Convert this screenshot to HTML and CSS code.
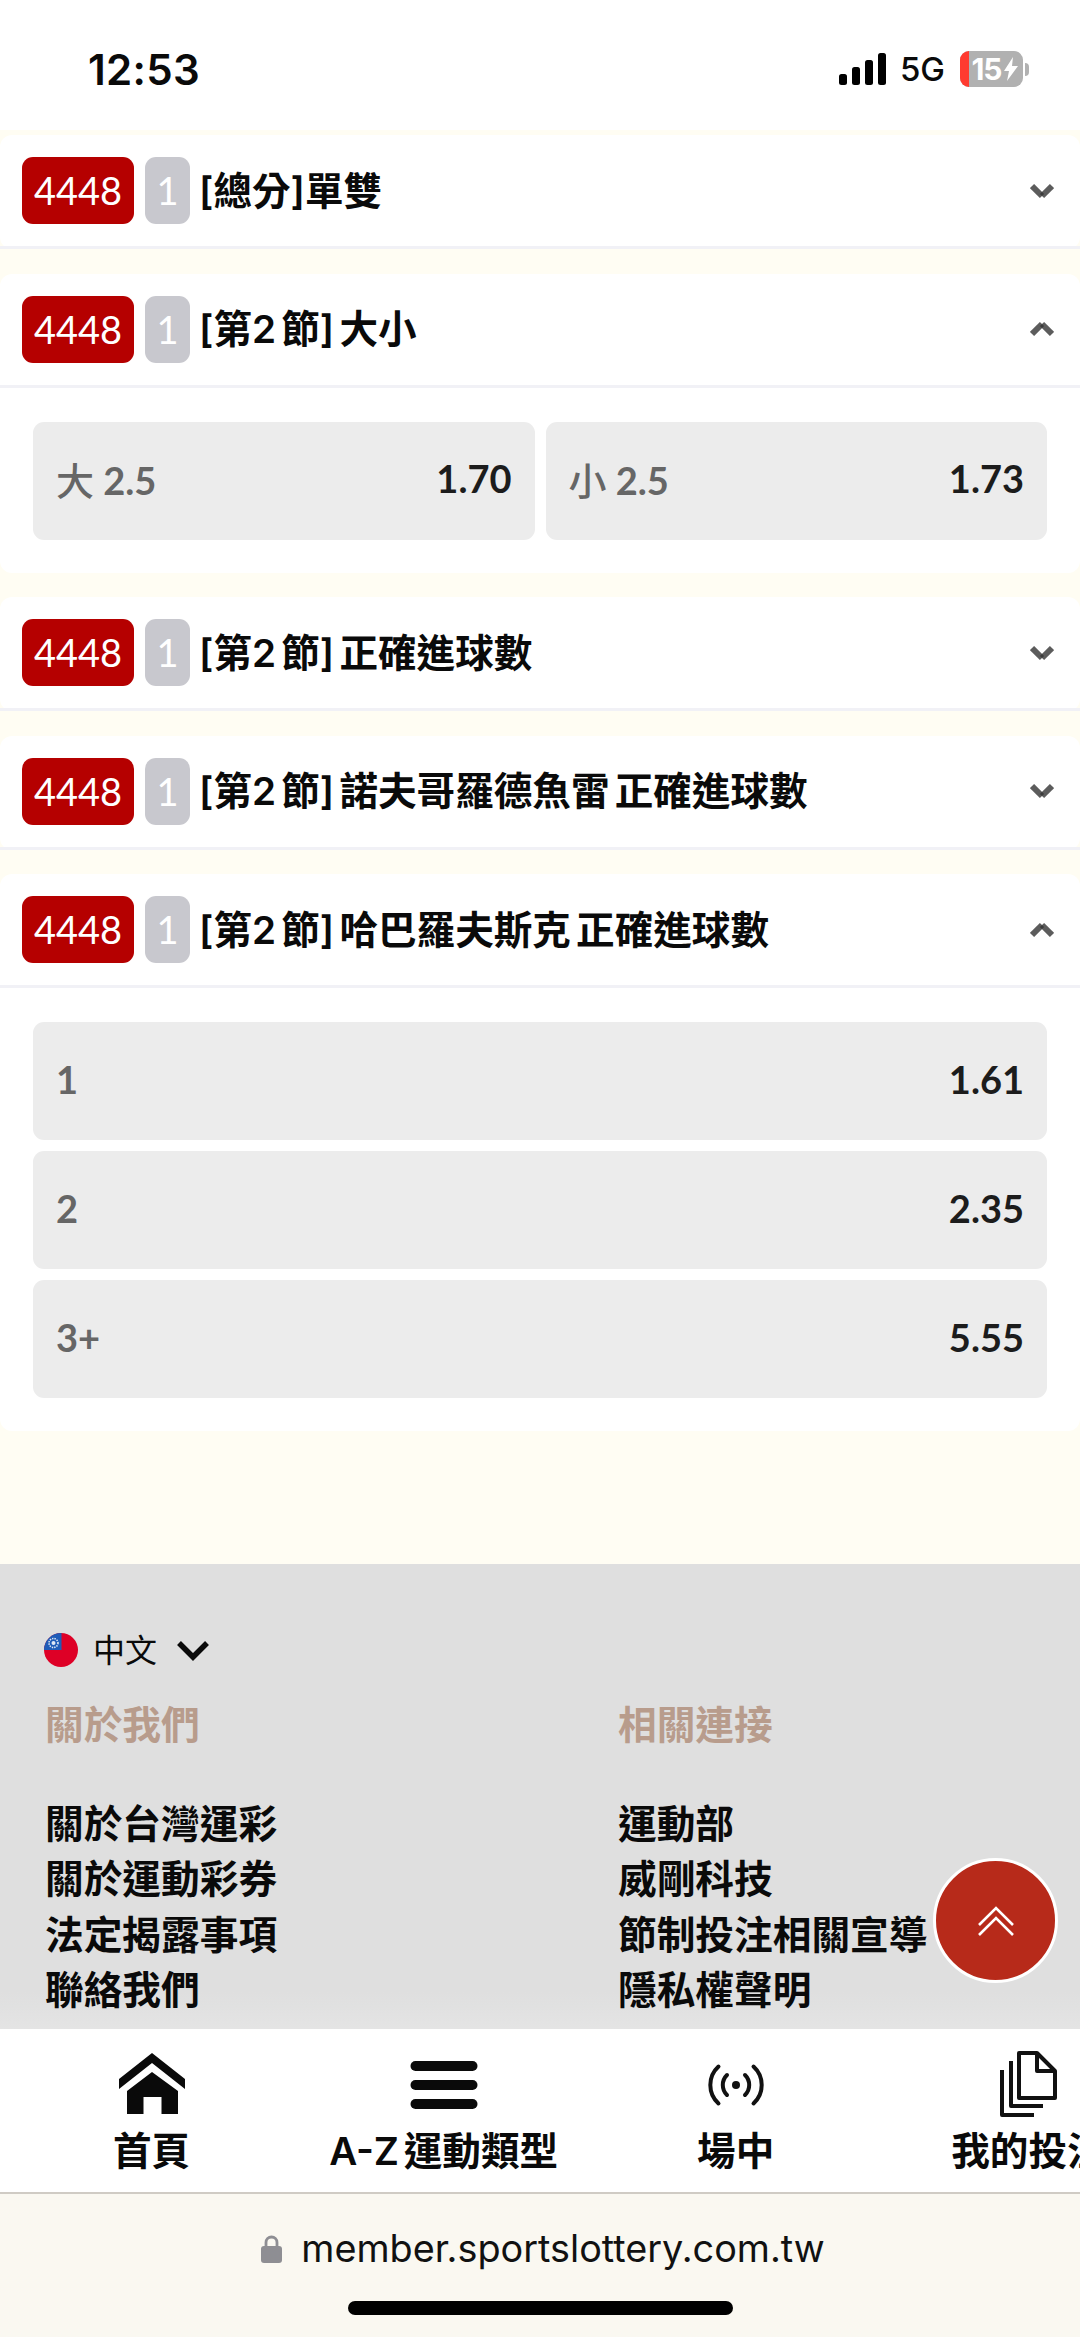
FILE: index.html
```html
<!DOCTYPE html>
<html lang="zh-Hant">
<head>
  <meta charset="UTF-8" />
  <meta name="viewport" content="width=device-width, initial-scale=1.0"/>
  <title>運彩</title>
  <link rel="stylesheet" href="styles.css">
</head>
<body>
<div class="page">

  <div class="status">
    <span class="time">12:53</span>
    <div class="status-right">
      <svg class="signal" width="47" height="32" viewBox="0 0 47 32"><rect x="0" y="21" width="8" height="11" rx="2.5"/><rect x="13" y="14" width="8" height="18" rx="2.5"/><rect x="26" y="7" width="8" height="25" rx="2.5"/><rect x="39" y="0" width="8" height="32" rx="2.5"/></svg>
      <span class="net">5G</span>
      <div class="battery">
        <div class="battery-body"><span class="battery-low"></span><span class="battery-num">15</span>
          <svg class="bolt" width="14" height="24" viewBox="0 0 14 24"><path d="M9 0 0 14h5L3 24l11-15H8z" fill="#fff"/></svg>
        </div>
        <span class="battery-cap"></span>
      </div>
    </div>
  </div>

  <main class="markets">
    <section class="card">
      <div class="card-head">
        <span class="code">4448</span><span class="num">1</span><span class="name">[總分]單雙</span>
        <svg class="arrow" width="24" height="18" viewBox="0 0 24 18"><path class="arrow-l" d="M2 4l10 10"/><path class="arrow-l" d="M22 4 12 14"/></svg>
      </div>
    </section>

    <section class="card">
      <div class="card-head">
        <span class="code">4448</span><span class="num">1</span><span class="name">[第2 節] 大小</span>
        <svg class="arrow" width="24" height="18" viewBox="0 0 24 18"><path class="arrow-l" d="M2 14 12 4"/><path class="arrow-l" d="M22 14 12 4"/></svg>
      </div>
      <div class="card-body two">
        <div class="opt"><span class="opt-label"><span class="opt-cjk">大</span> 2.5</span><span class="opt-val">1.70</span></div>
        <div class="opt"><span class="opt-label"><span class="opt-cjk">小</span> 2.5</span><span class="opt-val">1.73</span></div>
      </div>
    </section>

    <section class="card">
      <div class="card-head">
        <span class="code">4448</span><span class="num">1</span><span class="name">[第2 節] 正確進球數</span>
        <svg class="arrow" width="24" height="18" viewBox="0 0 24 18"><path class="arrow-l" d="M2 4l10 10"/><path class="arrow-l" d="M22 4 12 14"/></svg>
      </div>
    </section>

    <section class="card">
      <div class="card-head">
        <span class="code">4448</span><span class="num">1</span><span class="name">[第2 節] 諾夫哥羅德魚雷 正確進球數</span>
        <svg class="arrow" width="24" height="18" viewBox="0 0 24 18"><path class="arrow-l" d="M2 4l10 10"/><path class="arrow-l" d="M22 4 12 14"/></svg>
      </div>
    </section>

    <section class="card">
      <div class="card-head">
        <span class="code">4448</span><span class="num">1</span><span class="name">[第2 節] 哈巴羅夫斯克 正確進球數</span>
        <svg class="arrow" width="24" height="18" viewBox="0 0 24 18"><path class="arrow-l" d="M2 14 12 4"/><path class="arrow-l" d="M22 14 12 4"/></svg>
      </div>
      <div class="card-body">
        <div class="opt"><span class="opt-label">1</span><span class="opt-val">1.61</span></div>
        <div class="opt"><span class="opt-label">2</span><span class="opt-val">2.35</span></div>
        <div class="opt"><span class="opt-label">3+</span><span class="opt-val">5.55</span></div>
      </div>
    </section>
  </main>

  <footer class="foot">
    <div class="lang">
      <svg class="flag" width="34" height="34" viewBox="0 0 34 34"><defs><clipPath id="flagClip"><circle cx="17" cy="17" r="17"/></clipPath></defs><g clip-path="url(#flagClip)"><rect width="34" height="34" fill="#de0026"/><rect width="17.5" height="17" fill="#1f5cb8"/><circle cx="9.5" cy="10" r="4.5" fill="none" stroke="#dfe8f5" stroke-width="1.6" stroke-dasharray="1.4 1"/><circle cx="9.5" cy="10" r="2" fill="#dfe8f5"/></g></svg>
      <span class="lang-name">中文</span>
      <svg class="lang-arrow" width="34" height="22" viewBox="0 0 34 22"><path d="M3 4l14 14L31 4" fill="none" stroke="#0a0a0a" stroke-width="5.5"/></svg>
    </div>
    <div class="foot-cols">
      <div class="foot-col">
        <h4>關於我們</h4>
        <a>關於台灣運彩</a>
        <a>關於運動彩券</a>
        <a>法定揭露事項</a>
        <a>聯絡我們</a>
      </div>
      <div class="foot-col">
        <h4>相關連接</h4>
        <a>運動部</a>
        <a>威剛科技</a>
        <a>節制投注相關宣導</a>
        <a>隱私權聲明</a>
      </div>
    </div>
  </footer>

  <nav class="tabs">
    <div class="tab tab-home">
      <svg width="68" height="66" viewBox="0 0 68 66" fill="#0a0a0a"><path d="M34 2 67 28V38L34 12 1 38V28z"/><path d="M34 21 60 40V63H43.5V46H25.5V63H9V40z"/></svg>
      <span>首頁</span>
    </div>
    <div class="tab tab-az">
      <svg width="68" height="66" viewBox="0 0 68 66" fill="#0a0a0a"><rect x="0.5" y="10" width="67" height="10" rx="5"/><rect x="0.5" y="29" width="67" height="10" rx="5"/><rect x="0.5" y="48" width="67" height="10" rx="5"/></svg>
      <span>A-Z 運動類型</span>
    </div>
    <div class="tab tab-live">
      <svg width="64" height="66" viewBox="0 0 64 66" fill="none" stroke="#111" stroke-width="4" stroke-linecap="round"><path d="M14.5 15.5a25 25 0 0 0 0 37"/><path d="M49.5 15.5a25 25 0 0 1 0 37"/><path d="M23 24a14 14 0 0 0 0 20"/><path d="M41 24a14 14 0 0 1 0 20"/><circle cx="32" cy="34" r="4" fill="#111" stroke="none"/></svg>
      <span>場中</span>
    </div>
    <div class="tab tab-bets">
      <svg width="58" height="66" viewBox="0 0 58 66" fill="none" stroke="#111" stroke-width="4" stroke-linejoin="round"><path d="M3 19V64H35"/><path d="M12 10V55H44"/><path d="M20 2V47H56V20L38 2z"/><path d="M38 2V20H56"/></svg>
      <span>我的投注</span>
    </div>
  </nav>

  <div class="urlbar">
    <div class="url">
      <svg width="21" height="29" viewBox="0 0 21 29"><path d="M5 13V8.5a5.5 5.5 0 0 1 11 0V13" fill="none" stroke="#8e8e93" stroke-width="2.8"/><rect x="0" y="12" width="21" height="17" rx="3" fill="#8e8e93"/></svg>
      <span>member.sportslottery.com.tw</span>
    </div>
    <div class="home-bar"></div>
  </div>

  <a class="to-top">
    <svg width="36" height="30" viewBox="0 0 36 30" fill="none" stroke="#fff" stroke-width="2.6"><path d="M1 19 18 2 35 19"/><path d="M1 29 18 12 35 29"/></svg>
  </a>

</div>
</body>
</html>
```

FILE: styles.css
```css
* {
  box-sizing: border-box;
}

body {
  margin: 0;
  padding: 0;
  background: #fff;
  font-family: "Lato", "Noto Sans CJK TC", sans-serif;
  color: #0a0a0a;
}

.page {
  position: relative;
  display: flex;
  flex-direction: column;
  width: 1080px;
  height: 2337px;
  overflow: hidden;
}

/* status bar */
.status {
  display: flex;
  align-items: center;
  justify-content: space-between;
  flex: none;
  height: 130px;
  padding: 8px 51px 0 88px;
  background: #fff;
}

.time {
  font-family: "Inter", sans-serif;
  font-size: 42px;
  font-weight: 600;
  letter-spacing: 0.3px;
}

.status-right {
  display: flex;
  align-items: center;
}

.net {
  margin-left: 14px;
  font-family: "Inter", sans-serif;
  font-size: 33px;
  font-weight: 500;
}

.battery {
  display: flex;
  align-items: center;
  margin-left: 15px;
}

.battery-body {
  position: relative;
  display: flex;
  align-items: center;
  justify-content: center;
  gap: 2px;
  width: 63px;
  height: 36px;
  padding-left: 6px;
  border-radius: 9px;
  background: #b1b1b1;
  overflow: hidden;
}

.battery-low {
  position: absolute;
  left: 0;
  top: 0;
  bottom: 0;
  width: 9px;
  background: #ff3b30;
}

.battery-num {
  color: #fff;
  font-family: "Inter", sans-serif;
  font-size: 30px;
  font-weight: 700;
  letter-spacing: -1px;
}

.bolt {
  flex: none;
}

.battery-cap {
  width: 4px;
  height: 13px;
  margin-left: 2px;
  border-radius: 0 4px 4px 0;
  background: #b1b1b1;
}

/* market list */
.markets {
  flex: 1;
  padding-top: 5px;
  background: #fffdf3;
}

.card {
  margin-bottom: 24.5px;
  border-radius: 12px;
  background: #fff;
}

.card-head {
  display: flex;
  align-items: center;
  height: 114px;
  padding: 0 26px 0 22px;
  border-bottom: 3px solid #f1f1f6;
}

.code {
  width: 112px;
  height: 67px;
  border-radius: 11px;
  background: #b50000;
  color: #fff;
  font-size: 38px;
  line-height: 67px;
  text-align: center;
}

.num {
  width: 45px;
  height: 67px;
  margin-left: 11px;
  border-radius: 11px;
  background: #c8c8ce;
  color: #fff;
  font-size: 38px;
  line-height: 67px;
  text-align: center;
}

.name {
  flex: 1;
  margin-left: 9px;
  padding-bottom: 6px;
  font-family: "Inter", "Noto Sans CJK TC", sans-serif;
  font-size: 38.6px;
  font-weight: 600;
  word-spacing: -4.5px;
  white-space: nowrap;
}

.arrow {
  flex: none;
}

.arrow-l {
  fill: none;
  stroke: #333;
  stroke-width: 6;
  opacity: 0.8;
}

.card-body {
  display: flex;
  flex-direction: column;
  gap: 11px;
  padding: 34px 33px 33px;
}

.card-body.two {
  flex-direction: row;
}

.opt {
  display: flex;
  flex: 1;
  align-items: center;
  justify-content: space-between;
  min-height: 118px;
  padding: 0 23px 5px;
  border-radius: 11px;
  background: #ececec;
}

.opt-label {
  color: #666;
  font-size: 38px;
  font-weight: 700;
}

.opt-cjk {
  font-weight: 500;
}

.opt-val {
  color: #1c1c1c;
  font-size: 38px;
  font-weight: 700;
}

/* footer */
.foot {
  flex: none;
  height: 465px;
  padding: 69px 45px 0;
  background: linear-gradient(#dfdfdf 92%, #e4e4e4);
}

.lang {
  display: flex;
  align-items: center;
  height: 34px;
}

.flag {
  flex: none;
  margin-left: -1px;
}

.lang-name {
  margin: -4px 0 0 15px;
  font-size: 32px;
}

.lang-arrow {
  margin-left: 19px;
}

.foot-cols {
  display: grid;
  grid-template-columns: 573px 1fr;
  margin-top: 29.5px;
}

.foot-col {
  display: flex;
  flex-direction: column;
}

.foot-col h4 {
  margin: 0 0 44px;
  color: #b89c8c;
  font-size: 38.7px;
  font-weight: 600;
  line-height: 55px;
}

.foot-col a {
  font-size: 38.7px;
  font-weight: 600;
  line-height: 55.5px;
}

/* bottom tabs */
.tabs {
  display: flex;
  flex: none;
  align-items: flex-start;
  height: 165px;
  padding: 22px 0 0 113px;
  border-bottom: 2px solid #cfcbc4;
  background: #fff;
  overflow: hidden;
}

.tab {
  display: flex;
  flex: none;
  flex-direction: column;
  align-items: center;
  font-family: "Inter", "Noto Sans CJK TC", sans-serif;
  font-size: 38.6px;
  font-weight: 600;
  line-height: 50px;
  word-spacing: -5px;
  white-space: nowrap;
}

.tab svg {
  display: block;
  margin-bottom: 9px;
}

.tab-az {
  margin-left: 139px;
}

.tab-live {
  margin-left: 139px;
}

.tab-bets {
  margin-left: 177px;
}

/* browser url bar */
.urlbar {
  display: flex;
  flex: none;
  flex-direction: column;
  align-items: center;
  height: 143px;
  padding-top: 31px;
  background: #faf8f1;
}

.url {
  display: flex;
  align-items: center;
  gap: 19px;
  padding-left: 6px;
  font-family: "Inter", sans-serif;
  font-size: 37.8px;
  line-height: 46px;
  color: #111;
}

.home-bar {
  width: 385px;
  height: 14px;
  margin-top: 30px;
  border-radius: 7px;
  background: #000;
}

/* floating button */
.to-top {
  position: absolute;
  left: 933px;
  top: 1858px;
  display: flex;
  align-items: center;
  justify-content: center;
  width: 125px;
  height: 125px;
  border: 3px solid #fff;
  border-radius: 50%;
  background: #b72a1a;
}
```
